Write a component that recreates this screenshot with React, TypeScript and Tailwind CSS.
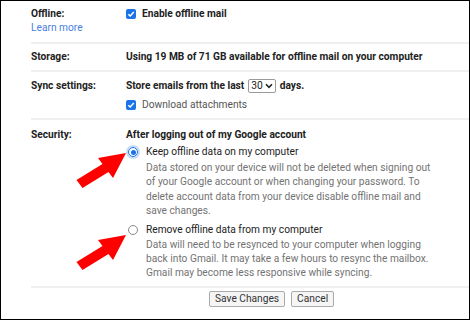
import React from "react";

function Checkbox() {
  return (
    <span className="w-[10px] h-[10px] rounded-[2px] bg-[#1a73e8] flex items-center justify-center shrink-0">
      <svg width="8" height="8" viewBox="0 0 8 8">
        <path d="M1.3 4.2 L3.2 6 L6.8 2" fill="none" stroke="#fff" strokeWidth="1.5" />
      </svg>
    </span>
  );
}

function Radio({ checked }: { checked?: boolean }) {
  if (checked) {
    return (
      <span className="w-[10px] h-[10px] rounded-full border-[1.5px] border-[#1a73e8] flex items-center justify-center shadow-[0_0_0_2px_rgba(26,115,232,0.25)] shrink-0">
        <span className="w-[5px] h-[5px] rounded-full bg-[#1a73e8]" />
      </span>
    );
  }
  return <span className="block w-[10px] h-[10px] rounded-full border-[1.3px] border-[#8a8a8a] shrink-0" />;
}

function Row({ label, children, className }: { label: React.ReactNode; children: React.ReactNode; className: string }) {
  return (
    <div className={`grid grid-cols-[95px_1fr] pr-[30px] ${className}`}>
      <div>{label}</div>
      <div>{children}</div>
    </div>
  );
}

function Divider() {
  return <div className="h-[2px] bg-[#efefef]" />;
}

function Lines({ lines, className }: { lines: string[]; className: string }) {
  return (
    <div className={`text-[#737373] leading-[14.4px] whitespace-nowrap ${className}`}>
      {lines.map((l) => (
        <div key={l}>{l}</div>
      ))}
    </div>
  );
}

export default function App() {
  return (
    <div className="relative w-[470px] h-[320px] bg-white border border-black overflow-hidden font-['Roboto',sans-serif] text-[10.2px] leading-[14px] text-[#222]">
      <div className="pl-[30px]">
        <Row className="pt-[6px] pb-[7px]" label={
          <>
            <div className="font-bold">Offline:</div>
            <div className="text-[#4a7fe0]">Learn more</div>
          </>
        }>
          <div className="flex items-center gap-[6px] font-bold">
            <Checkbox />
            <span>Enable offline mail</span>
          </div>
        </Row>
        <Divider />

        <Row className="pt-[6px] pb-[6px]" label={<span className="font-bold">Storage:</span>}>
          <span className="font-bold whitespace-nowrap">Using 19 MB of 71 GB available for offline mail on your computer</span>
        </Row>
        <Divider />

        <Row className="pt-[7px] pb-[6px]" label={<span className="font-bold">Sync settings:</span>}>
          <div className="flex items-center font-bold">
            <span>Store emails from the last</span>
            <span className="mx-[4px] h-[14px] px-[2px] border border-[#9a9a9a] rounded-[2px] flex items-center gap-[2px] font-normal">
              30
              <svg width="8" height="6" viewBox="0 0 8 6">
                <path d="M1 1.3 L4 4.3 L7 1.3" fill="none" stroke="#222" strokeWidth="1.6" />
              </svg>
            </span>
            <span>days.</span>
          </div>
          <div className="mt-[5px] flex items-center gap-[6px] text-[#555]">
            <Checkbox />
            <span>Download attachments</span>
          </div>
        </Row>
        <Divider />

        <Row className="pt-[8px] pb-[5px]" label={<span className="font-bold">Security:</span>}>
          <div className="font-bold">After logging out of my Google account</div>
          <div className="mt-[3px] grid grid-cols-[20px_1fr]">
            <div className="pt-[2px] pl-[2px]"><Radio checked /></div>
            <div>
              <div>Keep offline data on my computer</div>
              <Lines
                className="mt-[2px]"
                lines={[
                  "Data stored on your device will not be deleted when signing out",
                  "of your Google account or when changing your password. To",
                  "delete account data from your device disable offline mail and",
                  "save changes.",
                ]}
              />
            </div>
          </div>
          <div className="mt-[4px] grid grid-cols-[20px_1fr]">
            <div className="pt-[2px] pl-[2px]"><Radio /></div>
            <div>
              <div>Remove offline data from my computer</div>
              <Lines
                className="mt-[1px]"
                lines={[
                  "Data will need to be resynced to your computer when logging",
                  "back into Gmail. It may take a few hours to resync the mailbox.",
                  "Gmail may become less responsive while syncing.",
                ]}
              />
            </div>
          </div>
        </Row>
        <Divider />

        <div className="mt-[3px] pl-[178px] flex gap-[6px] text-[#333]">
          <button className="h-[16px] px-[5px] border border-[#aaa] rounded-[2px] bg-[#f5f5f5] leading-[14px]">Save Changes</button>
          <button className="h-[16px] px-[5px] border border-[#aaa] rounded-[2px] bg-[#f5f5f5] leading-[14px]">Cancel</button>
        </div>
      </div>

      <svg className="absolute inset-0 pointer-events-none" width="470" height="320" viewBox="0 0 470 320">
        <polygon points="125,152 112,177 107.5,171 81.5,187 75.5,179 101.5,163 97,157" fill="#f00" />
        <polygon points="125,152 112,177 107.5,171 81.5,187 75.5,179 101.5,163 97,157" fill="#f00" transform="translate(0,82)" />
      </svg>
    </div>
  );
}
